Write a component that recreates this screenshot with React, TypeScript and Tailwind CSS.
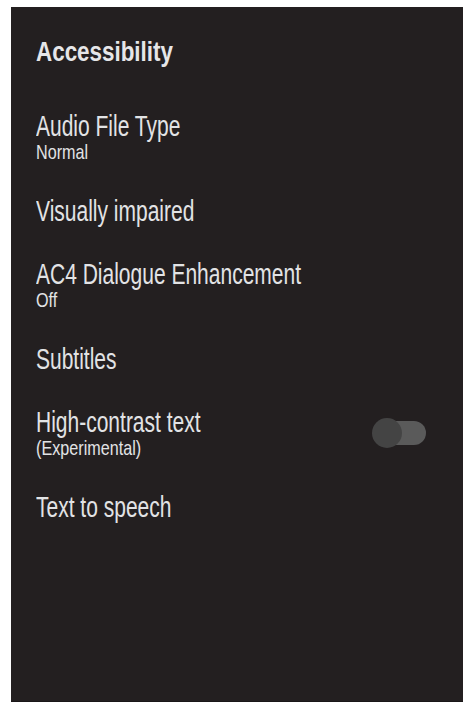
import React from "react";

type Row = { title: string; sub?: string; toggle?: boolean };

const rows: Row[] = [
  { title: "Audio File Type", sub: "Normal" },
  { title: "Visually impaired" },
  { title: "AC4 Dialogue Enhancement", sub: "Off" },
  { title: "Subtitles" },
  { title: "High-contrast text", sub: "(Experimental)", toggle: true },
  { title: "Text to speech" },
];

const font = {
  fontFamily: '"Liberation Sans", Arial, sans-serif',
};

export default function App() {
  return (
    <div className="w-[468px] h-[708px] bg-white pt-[7px] pl-[11px]" style={font}>
      <div className="w-[452px] h-[695px] bg-[#231f20] pt-[29px] pl-[25px] pr-[37px] text-[#e2e3e5] border-b border-[#1a1718]">
        <h1 className="text-[28px] leading-[32px] font-bold text-[#e6e6e8] origin-left scale-x-[0.8] whitespace-nowrap">
          Accessibility
        </h1>
        <div className="mt-[27px] flex flex-col">
          {rows.map((r) => (
            <div key={r.title} className="flex items-center justify-between pt-[17px] pb-[18px]">
              <div className="flex flex-col flex-1 min-w-0">
                <div className="text-[30px] leading-[28px] origin-left scale-x-[0.7] whitespace-nowrap">
                  {r.title}
                </div>
                {r.sub && (
                  <div className="text-[21px] leading-[21px] pt-[1px] origin-left scale-x-[0.77] whitespace-nowrap">
                    {r.sub}
                  </div>
                )}
              </div>
              {r.toggle && (
                <div className="relative w-[54px] h-[30px] shrink-0">
                  <div className="absolute left-[6px] right-0 top-[3px] h-[24px] rounded-full bg-[#5a5a5a]" />
                  <div className="absolute left-0 top-0 w-[30px] h-[30px] rounded-full bg-[#444444]" />
                </div>
              )}
            </div>
          ))}
        </div>
      </div>
    </div>
  );
}
